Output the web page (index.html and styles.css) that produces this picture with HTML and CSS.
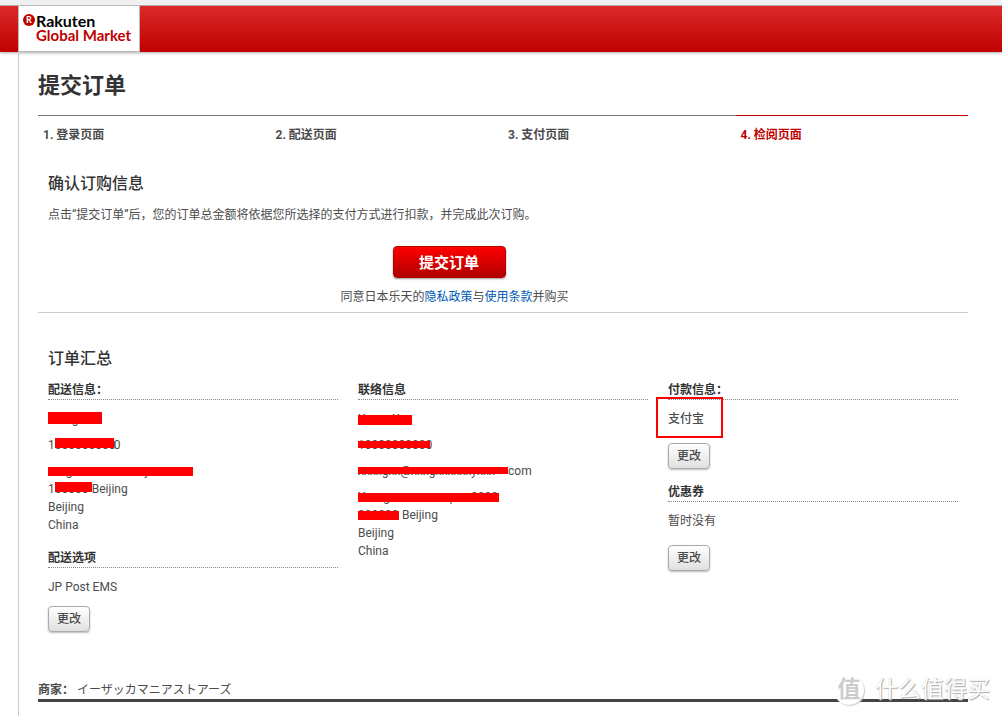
FILE: index.html
```html
<!DOCTYPE html>
<html lang="zh-CN">
<head>
<meta charset="utf-8">
<meta name="viewport" content="width=device-width, initial-scale=1">
<title>提交订单</title>
<link rel="stylesheet" href="styles.css">
</head>
<body>
<header class="header">
  <a class="logo" href="#" aria-label="Rakuten Global Market">
    <span class="logo-mark">R</span>
    <span class="logo-text"><span class="logo-top">Rakuten</span><span class="logo-bottom">Global Market</span></span>
  </a>
</header>
<main class="page">
  <h1 class="title">提交订单</h1>
  <ol class="steps">
    <li class="step">1. 登录页面</li>
    <li class="step">2. 配送页面</li>
    <li class="step">3. 支付页面</li>
    <li class="step step-active">4. 检阅页面</li>
  </ol>
  <section class="confirm">
    <h2 class="heading">确认订购信息</h2>
    <p class="intro">点击“提交订单”后，您的订单总金额将依据您所选择的支付方式进行扣款，并完成此次订购。</p>
    <div class="submit-area">
      <button class="submit" type="button">提交订单</button>
      <p class="terms">同意日本乐天的<a href="#">隐私政策</a>与<a href="#">使用条款</a>并购买</p>
    </div>
  </section>
  <section class="summary">
    <h2 class="heading">订单汇总</h2>
    <div class="columns">
      <div class="column">
        <h3 class="subheading">配送信息：</h3>
        <div class="details">
          <p><span class="mask mask-name mask-tall">xxxxgxxx</span></p>
          <p>1<span class="mask mask-phone mask-mid">000000000</span>0</p>
          <p><span class="mask mask-street mask-thin">xxxgxxxxxxxxxxxxyxxxx</span><br>1<span class="mask mask-zip mask-high">00000</span>Beijing<br>Beijing<br>China</p>
        </div>
        <h3 class="subheading">配送选项</h3>
        <p class="value">JP Post EMS</p>
        <button class="change" type="button">更改</button>
      </div>
      <div class="column">
        <h3 class="subheading">联络信息</h3>
        <div class="details">
          <p><span class="mask mask-name mask-low">Xxxxx Xxx</span></p>
          <p><span class="mask mask-full mask-narrow">10000000000</span></p>
          <p><span class="mask mask-mail mask-narrow">xxxxgxx@xxxgxxxxxxyxxx</span>com</p>
          <p><span class="mask mask-address mask-thin">Xxxxgxxxxxxxxxxpxx 0000</span><br><span class="mask mask-code mask-thin">000000</span> Beijing<br>Beijing<br>China</p>
        </div>
      </div>
      <div class="column">
        <h3 class="subheading">付款信息：</h3>
        <p class="value payment">支付宝</p>
        <button class="change" type="button">更改</button>
        <h3 class="subheading coupon">优惠券</h3>
        <p class="value coupon-value">暂时没有</p>
        <button class="change" type="button">更改</button>
      </div>
    </div>
  </section>
  <div class="shop"><strong>商家：</strong><span lang="ja" class="shop-name">イーザッカマニアストアーズ</span></div>
</main>
<div class="watermark"><span class="watermark-seal">值</span><span>什么值得买</span></div>
</body>
</html>
```
FILE: styles.css
```css
* { box-sizing: border-box; }
body {
  margin: 0;
  min-height: 100vh;
  display: flex;
  flex-direction: column;
  position: relative;
  background: #fff;
  color: #4c4c4c;
  font: 12px/18px Roboto, "Noto Sans CJK SC", sans-serif;
}
h1, h2, h3, p, ol { margin: 0; padding: 0; }
a { color: #0059b3; text-decoration: none; }
button { font-family: inherit; cursor: pointer; }

.header {
  display: flex;
  height: 52px;
  padding-left: 18px;
  border-top: 5px solid #f0f0f0;
  background: linear-gradient(#dc2b2b, #bf0000);
  box-shadow: inset 0 1px #b5a5a5, 0 1px 3px #aaa;
}
.logo {
  display: flex;
  width: 122px;
  padding: 7px 0 0 4px;
  background: #fff;
  border: 1px solid #bbb;
  font-family: Lato, sans-serif;
  font-weight: 700;
  color: #bf0000;
}
.logo-mark {
  width: 12px;
  height: 12px;
  margin-top: 1px;
  margin-right: 1px;
  border-radius: 50%;
  background: #bf0000;
  color: #fff;
  font-size: 9px;
  line-height: 12px;
  text-align: center;
}
.logo-text {
  display: flex;
  flex-direction: column;
  font-size: 15px;
  line-height: 15px;
  white-space: nowrap;
}
.logo-top {
  color: #000;
  font-size: 16px;
}

.page {
  flex: 1;
  margin-left: 18px;
  padding: 17px 34px 12px 19px;
  border-left: 1px solid #ccc;
}
.title {
  margin-bottom: 13px;
  color: #333;
  font-size: 22px;
  line-height: 33px;
}
.steps {
  display: grid;
  grid-template-columns: repeat(4, 1fr);
  list-style: none;
}
.step {
  padding: 10px 5px 0;
  border-top: 1px solid #777;
  font-weight: 700;
}
.step-active {
  border-color: #bf0000;
  color: #bf0000;
}
.confirm {
  padding: 28px 10px 6px;
  border-bottom: 1px solid #ccc;
}
.heading {
  color: #333;
  font-size: 16px;
  font-weight: 500;
  line-height: 24px;
}
.intro { margin-top: 10px; }
.submit-area {
  display: flex;
  flex-direction: column;
  align-items: center;
  padding-right: 97px;
  margin-top: 22px;
}
.submit {
  width: 113px;
  height: 32px;
  margin: 0 11px 10px 0;
  padding: 0 0 1px;
  border: 1px solid #b00000;
  border-radius: 4px;
  background: linear-gradient(#ff0000, #b00000);
  box-shadow: 0 1px 2px #999;
  color: #fff;
  font-size: 15px;
  font-weight: 700;
}

.summary { padding-top: 34px; }
.summary .heading { padding-left: 10px; }
.columns {
  display: grid;
  grid-template-columns: repeat(3, 1fr);
}
.column { padding: 10px 10px 0; }
.subheading {
  border-bottom: 1px dotted #888;
  color: #333;
  font-size: 12px;
  font-weight: 700;
  line-height: 18px;
}
.details { padding: 10px 0 15px; }
.details p + p { margin-top: 8px; }
.value { padding: 10px 0; }
.change {
  display: block;
  width: 42px;
  height: 26px;
  padding: 0 0 4px;
  border: 1px solid #aaa;
  border-radius: 4px;
  background: linear-gradient(#fff, #e0e0e0);
  box-shadow: 0 1px 2px #bbb;
  color: #4c4c4c;
  font-size: 12px;
  font-weight: 500;
}

/* Redaction strips over private details */
.mask {
  display: inline-block;
  position: relative;
  height: 18px;
  vertical-align: top;
  white-space: nowrap;
}
.mask::after {
  content: "";
  position: absolute;
  left: 0;
  right: 0;
  top: 5px;
  height: 9px;
  background: #f00;
}
.mask-tall::after { top: 2px; height: 12px; }
.mask-mid::after { top: 2px; height: 10px; }
.mask-low::after { top: 5px; height: 10px; }
.mask-high::after { top: 2px; height: 10px; }
.mask-narrow::after { top: 5px; height: 7px; }
.mask-name { width: 54px; }
.mask-phone { width: 59px; }
.mask-street { width: 145px; }
.mask-zip { width: 37px; }
.mask-full { width: 72px; }
.mask-mail { width: 150px; }
.mask-address { width: 141px; }
.mask-code { width: 41px; }

.payment {
  position: relative;
  font-weight: 500;
}
.payment::before {
  content: "";
  box-sizing: border-box;
  position: absolute;
  left: -12px;
  top: -3px;
  width: 67px;
  height: 41px;
  border: 2px solid #f00;
}
.payment + .change { margin-top: 5px; }
.coupon { margin-top: 14px; }
.coupon-value { margin-bottom: 5px; }

.shop {
  margin-top: 48px;
  border-bottom: 3px solid #444;
}
.shop-name {
  margin-left: 3px;
  font-family: "Noto Sans CJK JP", sans-serif;
}
.watermark {
  position: absolute;
  right: 12px;
  bottom: 11px;
  display: flex;
  align-items: center;
  gap: 11px;
  color: #fff;
  font-size: 23px;
  line-height: 30px;
  text-shadow: 1px 1px 1px #aaa, 0 0 1px #bbb;
}
.watermark-seal {
  width: 30px;
  height: 30px;
  border-radius: 50%;
  background: #fff;
  box-shadow: 1px 1px 1px #ccc;
  color: #ccc;
  font-weight: 700;
  text-align: center;
  text-shadow: none;
}
```
